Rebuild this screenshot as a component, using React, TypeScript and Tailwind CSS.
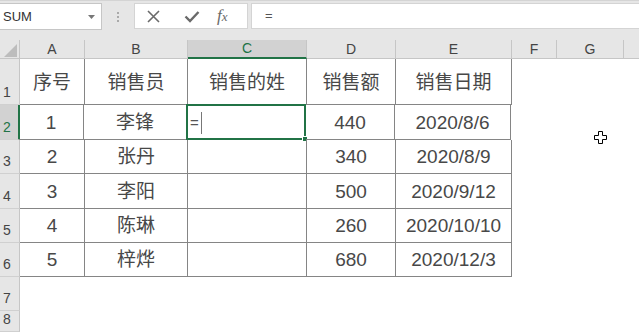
import React from "react";

const FONT = { fontFamily: '"Liberation Sans", "Noto Sans CJK SC", sans-serif' };

const cols = ["A", "B", "C", "D", "E", "F", "G", ""];
const rowHeights = ["h-[46px]", "h-[35px]", "h-[34px]", "h-[35px]", "h-[34px]", "h-[34px]", "h-[34px]", "h-[21px]"];

const data: string[][] = [
  ["序号", "销售员", "销售的姓", "销售额", "销售日期"],
  ["1", "李锋", "", "440", "2020/8/6"],
  ["2", "张丹", "", "340", "2020/8/9"],
  ["3", "李阳", "", "500", "2020/9/12"],
  ["4", "陈琳", "", "260", "2020/10/10"],
  ["5", "梓烨", "", "680", "2020/12/3"],
];

function Toolbar() {
  return (
    <div className="flex h-[40px] items-start bg-[#e6e6e6] border-t border-[#d4d4d4] pt-[2px]">
      <div className="relative flex h-[27px] w-[102px] items-center bg-white border border-l-0 border-[#c6c6c6] pl-[3px] text-[13px] text-[#333]">
        SUM
        <svg className="absolute right-[6px] top-[11px]" width="7" height="4" viewBox="0 0 7 4">
          <path d="M0 0h7L3.5 4z" fill="#777" />
        </svg>
      </div>
      <div className="flex h-[27px] w-[32px] flex-col items-center justify-center gap-[2px]">
        <div className="h-[2px] w-[2px] bg-[#aaa]" />
        <div className="h-[2px] w-[2px] bg-[#aaa]" />
        <div className="h-[2px] w-[2px] bg-[#aaa]" />
      </div>
      <div className="flex h-[26px] w-[114px] items-center bg-white border border-[#d4d4d4]">
        <svg className="ml-[12px]" width="13" height="13" viewBox="0 0 13 13">
          <path d="M1 1L12 12M12 1L1 12" stroke="#6a6a6a" strokeWidth="1.6" />
        </svg>
        <svg className="ml-[24px]" width="16" height="13" viewBox="0 0 16 13">
          <path d="M1.5 6.5L6 11L14.5 2" stroke="#6a6a6a" strokeWidth="2.4" fill="none" />
        </svg>
        <span
          className="ml-[17px] text-[17px] italic leading-[20px] text-[#6a6a6a]"
          style={{ fontFamily: '"Liberation Serif", serif' }}
        >
          f<span className="text-[13px]">x</span>
        </span>
      </div>
      <div className="ml-[3px] flex h-[26px] flex-1 items-center bg-white border border-r-0 border-[#d4d4d4] pl-[13px] text-[13px] text-[#555]">
        =
      </div>
    </div>
  );
}

function ColHeader() {
  return (
    <div className="flex h-[19px] bg-[#e6e6e6] border-b border-[#c6c6c6] text-[14px] text-[#444]">
      <div className="relative w-[20px] shrink-0 border-r border-[#c6c6c6]">
        <svg className="absolute left-[4px] top-[4px]" width="13" height="13" viewBox="0 0 13 13">
          <path d="M13 0V13H0z" fill="#bdbdbd" />
        </svg>
      </div>
      {cols.map((c, i) => {
        const w = ["w-[65px]", "w-[103px]", "w-[119px]", "w-[89px]", "w-[116px]", "w-[45px]", "w-[67px]", "flex-1"][i];
        const sel = c === "C";
        return (
          <div
            key={i}
            className={`${w} shrink-0 flex items-center justify-center ${
              sel ? "bg-[#d2d2d2] text-[#217346] border-b-2 border-b-[#217346] -mb-px" : ""
            } ${c ? "border-r border-[#c6c6c6]" : ""}`}
          >
            {c}
          </div>
        );
      })}
    </div>
  );
}

function Row({ idx }: { idx: number }) {
  const h = rowHeights[idx];
  const rowData = data[idx];
  const sel = idx === 1;
  const widths = ["w-[65px]", "w-[103px]", "w-[119px]", "w-[89px]", "w-[116px]"];
  return (
    <div className={`flex ${h}`}>
      <div
        className={`w-[20px] shrink-0 flex items-end pl-[3px] pb-[1px] text-[14px] ${
          sel
            ? "bg-[#d2d2d2] text-[#217346] border-r-2 border-r-[#217346] -mr-px"
            : "bg-[#e6e6e6] text-[#444] border-r border-[#c6c6c6]"
        } border-b border-b-[#d0d0d0]`}
      >
        {idx + 1}
      </div>
      {rowData ? (
        <>
          {rowData.map((t, j) => (
            <div
              key={j}
              className={`${widths[j]} relative shrink-0 flex items-end justify-center border-r border-b border-[#858585] text-[19px] text-[#484848] ${
                idx === 0 ? "pb-[9px]" : "pb-[4px]"
              } leading-[24px]`}
            >
              {t}
              {sel && j === 2 && (
                <>
                  <div className="absolute -left-px -top-px -right-px -bottom-px border-2 border-[#217346]" />
                  <div className="absolute left-[3px] top-[7px] flex items-center text-[15px] text-[#555] leading-[20px]">
                    =<span className="ml-[2px] inline-block h-[22px] w-[1.5px] bg-[#777]" />
                  </div>
                  <div className="absolute -right-[3px] -bottom-[3px] h-[6px] w-[6px] bg-[#217346] border border-white" />
                </>
              )}
            </div>
          ))}
          <div className="flex-1" />
        </>
      ) : (
        <div className="flex-1" />
      )}
    </div>
  );
}

export default function App() {
  return (
    <div className="relative h-[332px] w-[639px] overflow-hidden bg-white" style={FONT}>
      <Toolbar />
      <ColHeader />
      {rowHeights.map((_, i) => (
        <Row key={i} idx={i} />
      ))}
      <svg className="absolute left-[594px] top-[131px]" width="13" height="13" viewBox="0 0 13 13">
        <path
          d="M4.5 0.5H8.5V4.5H12.5V8.5H8.5V12.5H4.5V8.5H0.5V4.5H4.5Z"
          fill="white"
          stroke="black"
          strokeWidth="1"
        />
      </svg>
    </div>
  );
}
